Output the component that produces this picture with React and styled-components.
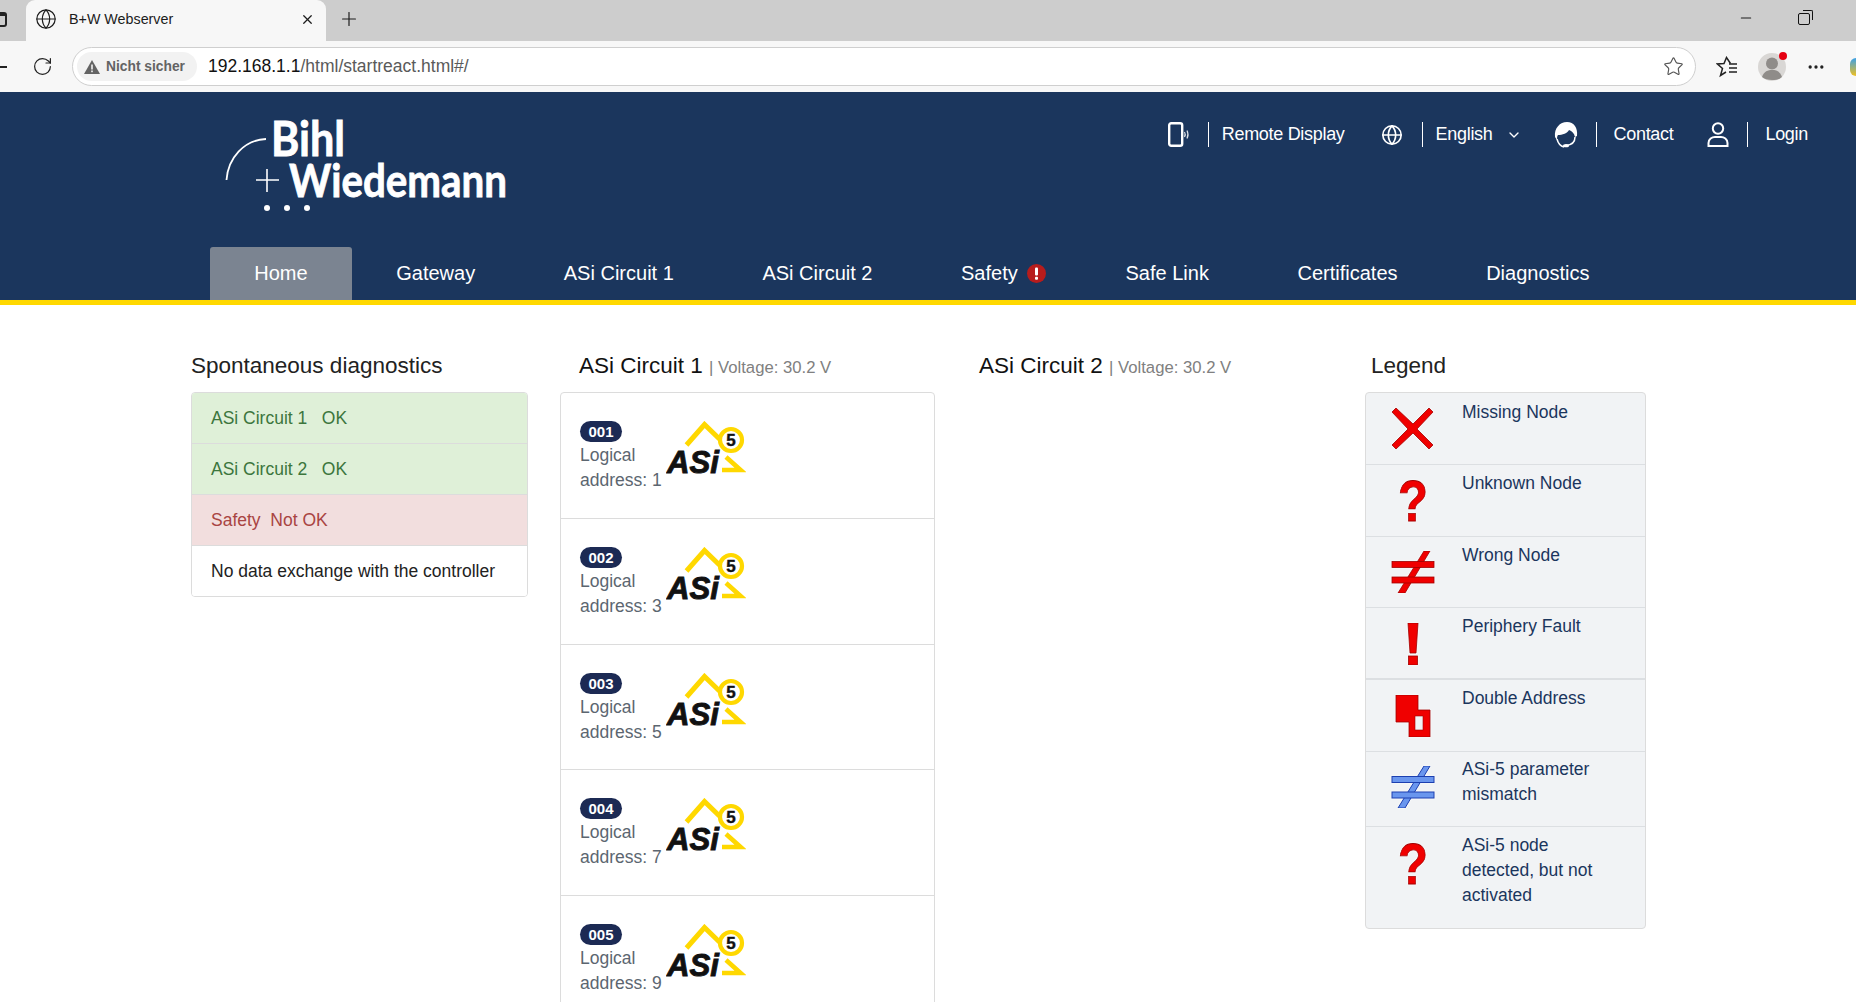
import React from 'react';
import styled, { createGlobalStyle } from 'styled-components';
import { Globe, RotateCw, Star, X, Plus, Minus, MoreHorizontal, ChevronDown } from 'lucide-react';

const GlobalStyle = createGlobalStyle`
  html, body {
    margin: 0;
    height: 100%;
    overflow: hidden;
    background: #fff;
    font-family: "Liberation Sans", Arial, sans-serif;
  }
  #root {
    height: 100vh;
    overflow: hidden;
  }
`;

/* browser chrome */
const TabStrip = styled.div`
  height: 41px;
  background: #cdcdcd;
  display: flex;
  align-items: stretch;
  color: #1c1c1c;
`;

const CutIcon = styled.div`
  width: 7px;
  height: 15px;
  margin: 12px 19px 0 0;
  border: 2px solid #222;
  border-left: 0;
  border-radius: 0 3px 3px 0;
  border-top-width: 4px;
  box-sizing: border-box;
`;

const BrowserTab = styled.div`
  width: 300px;
  background: #f7f7f7;
  border-radius: 9px 9px 0 0;
  display: flex;
  align-items: center;
  padding: 0 11px 3px 9px;
  box-sizing: border-box;
  gap: 12px;
  font-size: 14.3px;
`;

const TabTitle = styled.span`
  flex: 1;
`;

const NewTab = styled.div`
  display: flex;
  align-items: center;
  margin: 0 0 3px 12px;
`;

const WindowButtons = styled.div`
  margin-left: auto;
  display: flex;
  align-items: center;
  gap: 44px;
  padding: 0 46px 6px 0;
`;

const RestoreIcon = styled.div`
  position: relative;
  width: 10px;
  height: 10px;
  border: 1px solid #111;
  border-radius: 2px;
  margin-top: 2px;

  &::after {
    content: '';
    position: absolute;
    top: -4px;
    right: -4px;
    width: 9px;
    height: 9px;
    border: 1px solid #111;
    border-left: 0;
    border-bottom: 0;
    border-radius: 0 2px 0 0;
  }
`;

const Toolbar = styled.div`
  height: 51px;
  background: #f7f7f7;
  display: flex;
  align-items: center;
  box-sizing: border-box;
  overflow: hidden;
`;

const BackStub = styled.div`
  flex: none;
  width: 7px;
  height: 2px;
  background: #222;
  margin-right: 25px;
`;

const AddressBar = styled.div`
  flex: none;
  width: 1624px;
  height: 39px;
  margin-left: 19px;
  background: #fff;
  border: 1px solid #cfcfcf;
  border-radius: 20px;
  box-sizing: border-box;
  display: flex;
  align-items: center;
  padding: 0 11px 0 4px;
`;

const SecurityPill = styled.div`
  height: 29px;
  width: 120px;
  background: #f2f2f2;
  border-radius: 15px;
  display: flex;
  align-items: center;
  gap: 6px;
  padding-left: 7px;
  box-sizing: border-box;
  color: #636363;
  font-size: 13.8px;
  font-weight: 700;
`;

const Url = styled.div`
  margin-left: 11px;
  flex: 1;
  font-size: 17.5px;
  color: #5a5a5a;

  b {
    font-weight: 400;
    color: #111;
  }
`;

const ToolbarRight = styled.div`
  flex: none;
  display: flex;
  align-items: center;
  margin-left: 20px;
  gap: 20px;
`;

const Avatar = styled.div`
  position: relative;
  width: 28px;
  height: 28px;
  border-radius: 50%;
  background: #d9d7d5;

  &::after {
    content: '';
    position: absolute;
    top: -1px;
    right: -1px;
    width: 8px;
    height: 8px;
    border-radius: 50%;
    background: #e60012;
  }
`;

const CopilotStub = styled.div`
  width: 6px;
  height: 18px;
  border-radius: 6px 0 0 6px;
  background: linear-gradient(180deg, #3aa0e8, #f0c020);
  margin-left: 4px;
`;

/* page header */
const Header = styled.header`
  background: #1b365d;
  border-bottom: 5px solid #ffd800;
`;

const HeaderTop = styled.div`
  height: 155px;
  display: flex;
  justify-content: space-between;
  align-items: flex-start;
  padding: 0 48px 0 224px;
  box-sizing: border-box;
`;

const LogoSvg = styled.svg`
  margin-top: 26px;
  display: block;
`;

const Utilities = styled.div`
  display: flex;
  align-items: center;
  margin-top: 30px;
  height: 25px;
  color: #fff;
  font-size: 18px;
  letter-spacing: -0.3px;
`;

const UtilIcon = styled.div`
  display: flex;
  width: ${(p) => p.$w}px;
  justify-content: center;
  margin-left: ${(p) => p.$gap}px;
`;

const UtilLabel = styled.div`
  margin-left: ${(p) => p.$ml || 18}px;
  padding-left: ${(p) => p.$pl || 13}px;
  border-left: 1px solid #fff;
  line-height: 25px;
`;

const Chevron = styled.div`
  display: flex;
  margin-left: 13px;
`;

const Nav = styled.nav`
  display: flex;
  height: 53px;
  padding-left: 210px;
`;

const NavItem = styled.div`
  display: flex;
  align-items: center;
  gap: 9px;
  padding: 0 ${(p) => p.$right || 44.3}px 0 44.3px;
  color: #fff;
  font-size: 20px;
  background: ${(p) => (p.$active ? '#7b8491' : 'transparent')};
  border-radius: 3px 3px 0 0;
`;

/* content */
const Main = styled.main`
  display: grid;
  grid-template-columns: 337px 375px 366px 281px;
  column-gap: 32px;
  padding: 0 0 0 191px;
  align-items: start;
`;

const ColTitle = styled.h2`
  margin: 0;
  height: 87px;
  box-sizing: border-box;
  padding: 46px 0 0 ${(p) => p.$indent || 0}px;
  font-size: 22.5px;
  font-weight: 400;
  line-height: 30px;
  color: ${(p) => p.$color || '#111'};
  white-space: nowrap;
`;

const Voltage = styled.small`
  font-size: 16.7px;
  color: #808080;
`;

const StatusCard = styled.div`
  border: 1px solid #dcdcdc;
  border-radius: 4px;
  overflow: hidden;
`;

const tones = {
  ok: { bg: '#dff0d8', fg: '#3c763d' },
  bad: { bg: '#f2dede', fg: '#a94442' },
  plain: { bg: '#fff', fg: '#222' },
};

const StatusRow = styled.div`
  height: 51px;
  box-sizing: border-box;
  display: flex;
  align-items: center;
  padding-left: 19px;
  font-size: 17.5px;
  white-space: pre;
  background: ${(p) => tones[p.$tone].bg};
  color: ${(p) => tones[p.$tone].fg};
  border-bottom: 1px solid #dcdcdc;

  &:last-child {
    height: 50px;
    border-bottom: 0;
  }
`;

const NodeCard = styled.div`
  border: 1px solid #dcdcdc;
  border-radius: 4px;
`;

const NodeRow = styled.div`
  height: 125.8px;
  box-sizing: border-box;
  display: flex;
  gap: 4px;
  padding: 28px 0 0 19px;
  border-bottom: 1px solid #dcdcdc;
`;

const NodeText = styled.div`
  width: 82px;
  font-size: 17.5px;
  line-height: 25px;
  color: #5c6670;
  white-space: nowrap;
`;

const Badge = styled.div`
  width: 42px;
  height: 21px;
  margin-bottom: 1px;
  border-radius: 11px;
  background: #1c2a54;
  color: #fff;
  font-size: 15px;
  font-weight: 700;
  line-height: 21px;
  text-align: center;
`;

const LegendCard = styled.div`
  border: 1px solid #dcdcdc;
  border-radius: 4px;
  background: #f1f3f5;
`;

const LegendRow = styled.div`
  height: ${(p) => p.$h}px;
  box-sizing: border-box;
  display: flex;
  align-items: flex-start;
  border-bottom: ${(p) => (p.$thick ? 2 : 1)}px solid #dcdfe2;
  padding-left: 23px;

  &:last-child {
    border-bottom: 0;
  }
`;

const LegendIcon = styled.svg`
  flex: none;
  margin-top: ${(p) => p.$top}px;
  filter: drop-shadow(0 0 1px #fff);
`;

const LegendText = styled.div`
  margin-left: 25px;
  padding-top: ${(p) => p.$top}px;
  font-size: 17.5px;
  line-height: 25px;
  color: #1b365d;
`;

const RED = { fill: '#f00000', stroke: '#a00000', strokeWidth: 0.8 };
const BLUE = { fill: '#6a96ee', stroke: '#1c3fb0', strokeWidth: 1 };

const Question = () => (
  <text x="24" y="41" textAnchor="middle" fontFamily="Liberation Sans" fontWeight="700" fontSize="57" textLength="30" lengthAdjust="spacingAndGlyphs" {...RED}>?</text>
);

const NotEqual = ({ tone }) => (
  <g {...tone}>
    <polygon points="35,0 41,0 16,42 9,42" />
    <rect x="3" y="10.5" width="42" height="6" />
    <rect x="3" y="26" width="42" height="6" />
  </g>
);

const legendIcons = {
  cross: <path d="M7 0 L24 16 L40 0 L44 4 L28 21 L44 37 L40 41 L24 25 L7 41 L3 37 L19 21 L3 4 Z" {...RED} />,
  question: <Question />,
  wrong: <NotEqual tone={RED} />,
  fault: (
    <g {...RED}>
      <polygon points="19,0 29,0 27,30 21,30" />
      <rect x="19.5" y="33" width="9" height="9" />
    </g>
  ),
  double: (
    <g>
      <polygon points="7,0 29,0 29,15 41,15 41,42 20,42 20,27 7,27" {...RED} />
      <rect x="26" y="21" width="8" height="14" fill="#f1f3f5" stroke="#a00000" strokeWidth="0.6" />
    </g>
  ),
  mismatch: <NotEqual tone={BLUE} />,
};

const legend = [
  { icon: 'cross', label: 'Missing Node', h: 72, iconTop: 15, textTop: 7 },
  { icon: 'question', label: 'Unknown Node', h: 72, iconTop: 15, textTop: 6 },
  { icon: 'wrong', label: 'Wrong Node', h: 71, iconTop: 14, textTop: 6 },
  { icon: 'fault', label: 'Periphery Fault', h: 72, iconTop: 15, textTop: 6, thick: true },
  { icon: 'double', label: 'Double Address', h: 72, iconTop: 15, textTop: 6 },
  { icon: 'mismatch', label: <>ASi-5 parameter<br />mismatch</>, h: 75, iconTop: 14, textTop: 5 },
  { icon: 'question', label: <>ASi-5 node<br />detected, but not<br />activated</>, h: 101, iconTop: 16, textTop: 6 },
];

const nodes = [
  { id: '001', address: 1 },
  { id: '002', address: 3 },
  { id: '003', address: 5 },
  { id: '004', address: 7 },
  { id: '005', address: 9 },
];

const navItems = ['Gateway', 'ASi Circuit 1', 'ASi Circuit 2'];

const BwLogo = () => (
  <LogoSvg width="284" height="96" viewBox="224 118 284 96">
    <path d="M226.5 180 C228 158 244 140 266 139" fill="none" stroke="#fff" strokeWidth="1.8" />
    <path d="M256 180 H279 M267 169 V192" fill="none" stroke="#fff" strokeWidth="1.6" />
    <circle cx="267" cy="208" r="3" fill="#fff" />
    <circle cx="287" cy="208" r="3" fill="#fff" />
    <circle cx="307" cy="208" r="3" fill="#fff" />
    <text x="271" y="156" fill="#fff" stroke="#fff" strokeWidth="0.8" fontFamily="Lato" fontWeight="700" fontSize="47" textLength="74" lengthAdjust="spacingAndGlyphs">Bihl</text>
    <text x="289" y="197" fill="#fff" stroke="#fff" strokeWidth="0.8" fontFamily="Lato" fontWeight="700" fontSize="46" textLength="218" lengthAdjust="spacingAndGlyphs">Wiedemann</text>
  </LogoSvg>
);

const AsiLogo = () => (
  <svg width="80" height="56" viewBox="0 0 80 56">
    <path d="M20.5 24 L38.5 3.5 L53.5 18" fill="none" stroke="#ffd800" strokeWidth="5" />
    <circle cx="65" cy="19" r="11" fill="#fff" stroke="#ffd800" strokeWidth="4.2" />
    <text x="65" y="25" textAnchor="middle" fontFamily="Liberation Sans" fontWeight="700" fontSize="17" fill="#111" stroke="#111" strokeWidth="0.4">5</text>
    <path d="M60 36 L74.5 49 H56" fill="none" stroke="#ffd800" strokeWidth="4.6" />
    <text x="1" y="52" fontFamily="Liberation Sans" fontWeight="700" fontStyle="italic" fontSize="31" fill="#111" stroke="#111" strokeWidth="0.9" textLength="52" lengthAdjust="spacingAndGlyphs">ASi</text>
  </svg>
);

const PhoneIcon = () => (
  <svg width="22" height="25" viewBox="0 0 22 25" fill="none" stroke="#fff">
    <rect x="1.2" y="1.2" width="13" height="22.6" rx="2" strokeWidth="2.4" />
    <path d="M16.5 10 Q18 12.5 16.5 15 M19 8.5 Q21 12.5 19 16.5" strokeWidth="1.2" opacity="0.85" />
  </svg>
);

const HeadsetIcon = () => (
  <svg width="24" height="26" viewBox="0 0 24 26">
    <path d="M1 15 C0 6 6 0 13 0 C20 0 24 6 23 14 L21 15 C20 11 18 9 15 8 C14 11 8 13 4 13 C3 14 3 16 3 18 Z" fill="#fff" />
    <path d="M3 17 C4 21 6 24 10 25" fill="none" stroke="#fff" strokeWidth="1.5" />
    <path d="M21 15 C21 20 18 23 12 23.5" fill="none" stroke="#fff" strokeWidth="1.5" />
    <ellipse cx="12" cy="23.7" rx="3" ry="1.6" fill="#fff" />
  </svg>
);

const PersonIcon = () => (
  <svg width="22" height="25" viewBox="0 0 22 25" fill="none" stroke="#fff" strokeWidth="2">
    <circle cx="11" cy="6.5" r="5.2" />
    <path d="M1.5 24 V21 C1.5 17 5 15 8 15 H14 C17 15 20.5 17 20.5 21 V24 Z" />
  </svg>
);

const AlertDot = () => (
  <svg width="19" height="19" viewBox="0 0 19 19">
    <circle cx="9.5" cy="9.5" r="9.5" fill="#b71c1c" />
    <rect x="8" y="3.5" width="3" height="8" rx="1" fill="#fff" />
    <rect x="8" y="12.8" width="3" height="3" rx="1" fill="#fff" />
  </svg>
);

const WarnTriangle = () => (
  <svg width="16" height="14" viewBox="0 0 16 14">
    <path d="M8 0 L16 14 H0 Z" fill="#636363" />
    <rect x="7.2" y="4.5" width="1.6" height="5" fill="#f2f2f2" />
    <rect x="7.2" y="10.5" width="1.6" height="1.7" fill="#f2f2f2" />
  </svg>
);

const FavoritesIcon = () => (
  <svg width="22" height="22" viewBox="0 0 22 22" fill="none" stroke="#222" strokeWidth="1.5">
    <path d="M14.5 7.5 L10.5 1.5 L8 7.5 L1.5 8 L6.5 12.5 L4.5 19.5 L10 16" />
    <path d="M13 8 H21 M13 12 H21 M13 16 H21" />
  </svg>
);

const AvatarFigure = () => (
  <svg width="28" height="28" viewBox="0 0 28 28">
    <circle cx="14" cy="10.5" r="6" fill="#8f8c89" />
    <path d="M4 24 C6 18 10 17 14 17 C18 17 22 18 24 24 C20 28 8 28 4 24 Z" fill="#8f8c89" />
  </svg>
);

const App = () => (
  <>
    <GlobalStyle />
    <TabStrip>
      <CutIcon />
      <BrowserTab>
        <Globe size={22} strokeWidth={1.3} />
        <TabTitle>B+W Webserver</TabTitle>
        <X size={15} strokeWidth={2} />
      </BrowserTab>
      <NewTab>
        <Plus size={22} strokeWidth={1.3} />
      </NewTab>
      <WindowButtons>
        <Minus size={16} strokeWidth={1.6} />
        <RestoreIcon />
      </WindowButtons>
    </TabStrip>
    <Toolbar>
      <BackStub />
      <RotateCw size={21} strokeWidth={1.4} color="#222" />
      <AddressBar>
        <SecurityPill>
          <WarnTriangle />
          Nicht sicher
        </SecurityPill>
        <Url><b>192.168.1.1</b>/html/startreact.html#/</Url>
        <Star size={21} strokeWidth={1.3} color="#555" />
      </AddressBar>
      <ToolbarRight>
        <FavoritesIcon />
        <Avatar><AvatarFigure /></Avatar>
        <MoreHorizontal size={20} color="#222" />
        <CopilotStub />
      </ToolbarRight>
    </Toolbar>

    <Header>
      <HeaderTop>
        <BwLogo />
        <Utilities>
          <PhoneIcon />
          <UtilLabel>Remote Display</UtilLabel>
          <UtilIcon $w={22} $gap={36}><Globe size={22} color="#fff" strokeWidth={1.8} /></UtilIcon>
          <UtilLabel $ml={19}>English</UtilLabel>
          <Chevron><ChevronDown size={16} strokeWidth={2} /></Chevron>
          <UtilIcon $w={24} $gap={32}><HeadsetIcon /></UtilIcon>
          <UtilLabel $pl={17}>Contact</UtilLabel>
          <UtilIcon $w={22} $gap={34}><PersonIcon /></UtilIcon>
          <UtilLabel $pl={17}>Login</UtilLabel>
        </Utilities>
      </HeaderTop>
      <Nav>
        <NavItem $active>Home</NavItem>
        {navItems.map((item) => <NavItem key={item}>{item}</NavItem>)}
        <NavItem $right={35.5}>Safety <AlertDot /></NavItem>
        <NavItem>Safe Link</NavItem>
        <NavItem>Certificates</NavItem>
        <NavItem>Diagnostics</NavItem>
      </Nav>
    </Header>

    <Main>
      <section>
        <ColTitle $color="#222">Spontaneous diagnostics</ColTitle>
        <StatusCard>
          <StatusRow $tone="ok">ASi Circuit 1   OK</StatusRow>
          <StatusRow $tone="ok">ASi Circuit 2   OK</StatusRow>
          <StatusRow $tone="bad">Safety  Not OK</StatusRow>
          <StatusRow $tone="plain">No data exchange with the controller</StatusRow>
        </StatusCard>
      </section>
      <section>
        <ColTitle $indent={19}>ASi Circuit 1 <Voltage>| Voltage: 30.2 V</Voltage></ColTitle>
        <NodeCard>
          {nodes.map((node) => (
            <NodeRow key={node.id}>
              <NodeText>
                <Badge>{node.id}</Badge>
                Logical<br />address: {node.address}
              </NodeText>
              <AsiLogo />
            </NodeRow>
          ))}
        </NodeCard>
      </section>
      <section>
        <ColTitle $indent={12}>ASi Circuit 2 <Voltage>| Voltage: 30.2 V</Voltage></ColTitle>
      </section>
      <section>
        <ColTitle $indent={6} $color="#222">Legend</ColTitle>
        <LegendCard>
          {legend.map((row, i) => (
            <LegendRow key={i} $h={row.h} $thick={row.thick}>
              <LegendIcon width="48" height="42" viewBox="0 0 48 42" $top={row.iconTop}>
                {legendIcons[row.icon]}
              </LegendIcon>
              <LegendText $top={row.textTop}>{row.label}</LegendText>
            </LegendRow>
          ))}
        </LegendCard>
      </section>
    </Main>
  </>
);

export default App;
